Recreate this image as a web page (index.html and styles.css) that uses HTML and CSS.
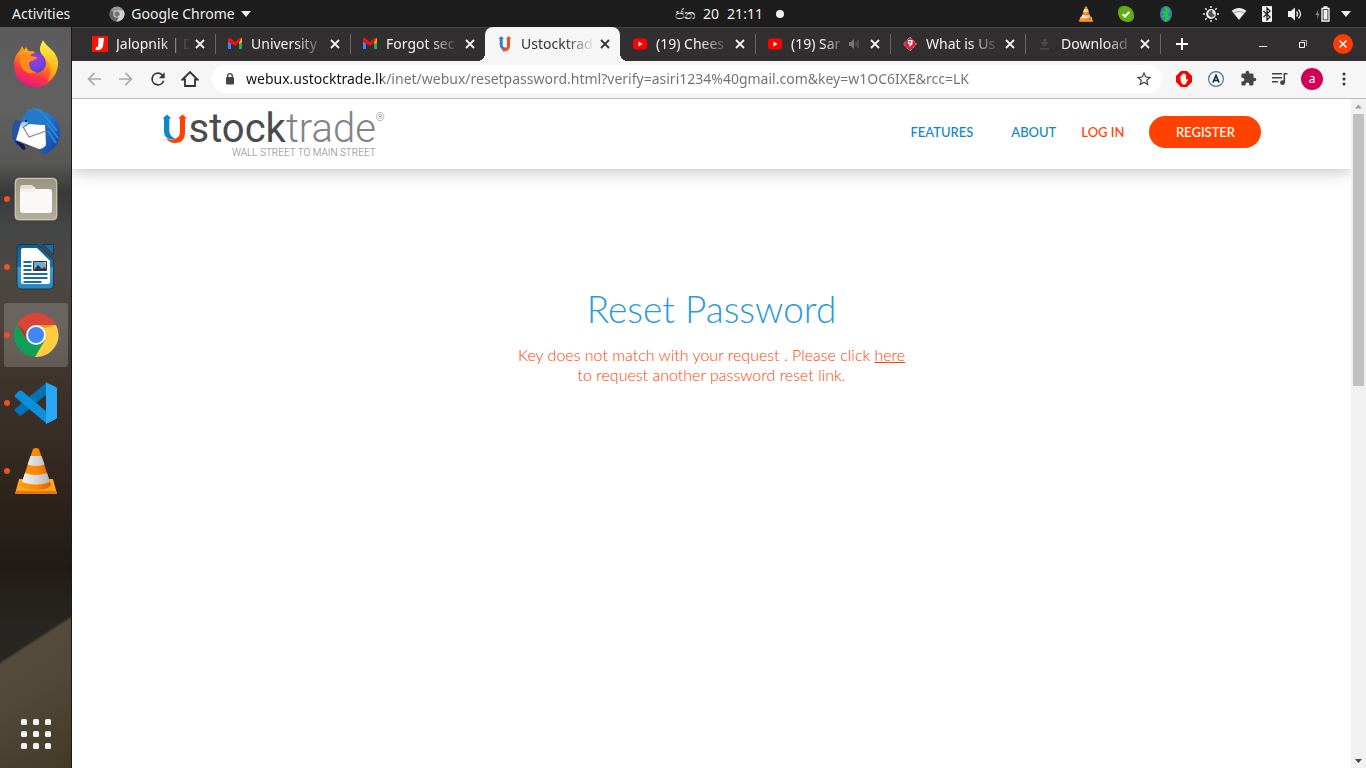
FILE: index.html
```html
<!DOCTYPE html>
<html lang="en">
<head>
<meta charset="utf-8">
<title>Ustocktrade</title>
<link rel="stylesheet" href="styles.css">
</head>
<body>
<svg class="defs" aria-hidden="true">
  <defs>
    <linearGradient id="cone" x1="0" x2="1" y1="0" y2="0"><stop offset="0" stop-color="#f90"/><stop offset=".5" stop-color="#ff8a00"/><stop offset="1" stop-color="#d95f00"/></linearGradient>
    <linearGradient id="coneWhite" x1="0" x2="1" y1="0" y2="0"><stop offset="0" stop-color="#f4f4f4"/><stop offset=".5" stop-color="#d8d8d8"/><stop offset="1" stop-color="#b5b5b5"/></linearGradient>
    <linearGradient id="fox" x1=".8" x2=".3" y1="0" y2="1"><stop offset="0" stop-color="#fff44f"/><stop offset=".35" stop-color="#ff980e"/><stop offset=".7" stop-color="#ff3647"/><stop offset="1" stop-color="#e31587"/></linearGradient>
    <linearGradient id="foxTail" x1=".5" x2=".5" y1="0" y2="1"><stop offset="0" stop-color="#fff44f"/><stop offset=".6" stop-color="#ffbd20"/><stop offset="1" stop-color="#ff8a16"/></linearGradient>
    <radialGradient id="globe" cx=".5" cy=".3" r=".7"><stop offset="0" stop-color="#a43be0"/><stop offset=".6" stop-color="#7542e5"/><stop offset="1" stop-color="#4c46b8"/></radialGradient>
    <linearGradient id="bird" x1="0" x2="1" y1="0" y2="1"><stop offset="0" stop-color="#2aa0e6"/><stop offset=".5" stop-color="#1b6fd0"/><stop offset="1" stop-color="#173c93"/></linearGradient>
    <linearGradient id="writer" x1="0" x2="0" y1="0" y2="1"><stop offset="0" stop-color="#0d5c8f"/><stop offset=".5" stop-color="#1a75ab"/><stop offset=".52" stop-color="#3e9fd2"/><stop offset="1" stop-color="#2b86ba"/></linearGradient>
    <linearGradient id="files" x1="0" x2="0" y1="0" y2="1"><stop offset="0" stop-color="#9b9482"/><stop offset="1" stop-color="#b4ad9b"/></linearGradient>
    <symbol id="vlc" viewBox="0 0 44 48">
      <path d="M5 32h34l4 15H1z" fill="#ffa51e"/><path d="M2 44h40l1 3H1z" fill="#e87700"/>
      <path d="M19 2q3-2 6 0l12 36q-3 5-15 5T7 38z" fill="url(#cone)"/>
      <path d="M16.500 9h11l3 8.500q-8 3-17 0zM11 26q11 4 22 0l3 9q-14 5-28 0z" fill="url(#coneWhite)"/>
    </symbol>
    <symbol id="gmail" viewBox="0 0 16 13">
      <path d="M1 3v9h3V5z" fill="#4285f4"/><path d="M12 5v7h3V3z" fill="#34a853"/><path d="M12 2.500 15 1v4l-3 2z" fill="#fbbc04"/>
      <path d="M1 4.500V1.500Q2 0 4 1.500L8 5l4-3.500Q13 .5 14 1l-1 3.500L8 9z" fill="#e8130c"/>
    </symbol>
    <symbol id="youtube" viewBox="0 0 16 12"><rect x="1" y=".5" width="14" height="11" rx="3" fill="#f00"/><path d="M6.500 3.500v5l4-2.500z" fill="#fff"/></symbol>
    <symbol id="close" viewBox="0 0 16 16"><path d="m4 4 8 8m0-8-8 8" fill="none" stroke="currentColor" stroke-width="1.800"/></symbol>
    <symbol id="bt" viewBox="0 0 16 16"><path d="m4.500 5 6.500 6-3 3V2l3 3-6.500 6" fill="none" stroke="currentColor" stroke-width="1.300"/></symbol>
  </defs>
</svg>

<header class="topbar">
  <div class="topbar-left">
    <button class="bar-btn">Activities</button>
    <button class="bar-btn app-menu">
      <svg width="16" height="16" viewBox="0 0 16 16"><circle cx="8" cy="8" r="7.500" fill="#999"/><path d="M8 8 1.500 4.200A7.500 7.500 0 0 0 7 15.400l3.500-6z" fill="#666"/><path d="M8 4.500h6.600A7.500 7.500 0 0 1 7.500 15.500L11 9.500z" fill="#d0d0d0"/><circle cx="8" cy="8" r="3.600" fill="#ddd"/><circle cx="8" cy="8" r="2.700" fill="#777"/></svg>
      <span>Google Chrome</span>
      <svg width="10" height="6" viewBox="0 0 10 6"><path d="M0 0h10L5 6z" fill="#eee"/></svg>
    </button>
  </div>
  <div class="topbar-clock"><span>ජන</span><span>20</span><span>21:11</span><i class="dot"></i></div>
  <div class="topbar-right">
    <div class="tray">
      <svg width="16" height="16"><use href="#vlc"/></svg>
      <svg width="16" height="16" viewBox="0 0 16 16"><rect width="12" height="12" rx="5" fill="#5a9e12"/><rect x="4" y="4" width="12" height="12" rx="5" fill="#5a9e12"/><circle cx="8" cy="8" r="7.500" fill="#64ad17"/><path d="m4.700 8.200 2.300 2.300 4.300-4.500" fill="none" stroke="#fff" stroke-width="2"/></svg>
      <svg width="16" height="16" viewBox="0 0 16 16"><ellipse cx="8" cy="8" rx="6" ry="8" fill="#4a77ad"/><path d="m4.500 5 6.500 6-3 3V2l3 3-6.500 6" fill="none" stroke="#0be02a" stroke-width="1.600"/></svg>
    </div>
    <div class="status">
      <svg width="16" height="16" viewBox="0 0 16 16"><circle cx="8" cy="8" r="4.900" fill="#eee"/><path d="M9.500 4.200a3.300 3.300 0 0 0 2.500 4.600 3.500 3.500 0 1 1-2.500-4.600" fill="#1d1d1d" opacity=".75"/><path d="M8 0v2m0 12v2M0 8h2m12 0h2M2.300 2.300l1.400 1.400m8.600 8.600 1.400 1.400m0-11.400-1.400 1.400m-8.600 8.600-1.400 1.400" stroke="#eee" stroke-width="1.400"/></svg>
      <svg width="16" height="16" viewBox="0 0 16 16"><path d="M.5 5Q8-1 15.500 5L8 14z" fill="#aaa"/><path d="M1.200 4.500Q8-.5 14.800 4.500l-1.500 2Q8 3 2.700 6.500z" fill="#eee"/><path d="M3.500 7.500Q8 4.500 12.500 7.500L8 13.500z" fill="#f2f2f2"/></svg>
      <svg class="bt-tile" width="16" height="16" viewBox="0 0 16 16"><rect x="3" width="10" height="16" rx="1" fill="#f2f2f2"/><use href="#bt"/></svg>
      <svg width="16" height="16" viewBox="0 0 16 16"><path d="M1 5h3l4-3.500v13L4 11H1z" fill="#f2f2f2"/><path d="M9.500 5.500q2 2.500 0 5M11.500 3.500q4 4.500 0 9" fill="none" stroke="#ddd" stroke-width="1.400"/></svg>
      <svg width="16" height="16" viewBox="0 0 16 16"><path d="M3.500 3 .5 9h2L2 14l2.500-6.500H2.800z" fill="#888"/><path d="M7 2.500h7v12.500H7zM8.500 1h4" fill="none" stroke="#f2f2f2" stroke-width="1.400"/><path d="M8.500 4h4v9.500h-4z" fill="#eee"/></svg>
      <svg class="caret" width="10" height="6" viewBox="0 0 10 6"><path d="M0 0h10L5 6z" fill="#eee"/></svg>
    </div>
  </div>
</header>

<div class="desktop">
  <nav class="dock" aria-label="Dock">
    <button class="dock-item" aria-label="Firefox"><svg width="48" height="48" viewBox="0 0 48 48">
      <path d="M3 28C1 19 6 14 8 11l2-4 3 5h8l6 5 4 16H15z" fill="#ff9416"/>
      <path d="M2 25c0-4 2-9 4-11l2 3c3-5 5-6 6-9l4 7 10 1 8 4 8-1c5 15-6 29-20 29S2 38 2 25z" fill="url(#fox)"/>
      <path d="M31 1c3 7 13 10 15 21 1 9-4 17-11 21 4-6 5-14 2-19-2-5-9-8-9-13 0-5 2-7 3-10z" fill="url(#foxTail)"/>
      <circle cx="24" cy="24" r="10" fill="url(#globe)"/>
      <path d="M8 17c5-3 9-3 11 0l6 1c-1 4-6 3-8 6 0 5 3 9 8 9-9 4-16-2-17-10z" fill="#ff8b18"/>
    </svg></button>
    <button class="dock-item" aria-label="Thunderbird"><svg width="50" height="50" viewBox="0 0 50 50">
      <path d="M4 14C2 18 1 22 1 27c0 5 2 9 5 13l6-3 3-21z" fill="#2352a8"/>
      <path d="M16 5c6-4 12-3 17 1 9 2 16 10 16 20 0 9-4 16-10 19l-5 3h-4l3-3-6 2 8-8V20z" fill="url(#bird)"/>
      <path d="m10 17 24 2 1 20q-3 4-7 4L5 34z" fill="#fff"/><path d="m11 19 7 12 17-6" fill="none" stroke="#888" stroke-width="1.200"/>
      <path d="M20 3q13 1 15 16l-17-1-6 4-2-4Q11 7 20 3z" fill="#2479c9"/><path d="M10 17q7-4 7 0l-6 5z" fill="#a8d7f1"/><circle cx="15" cy="15" r="1.300" fill="#222"/>
      <path d="m34 10 12 15M36 17l11 15M37 25l8 12" stroke="#3189d4" stroke-width="2"/>
      <path d="m4 35 8 9 3-1-2-4 8 3-16-7z" fill="#1d1452"/>
    </svg></button>
    <button class="dock-item running" aria-label="Files"><svg width="46" height="46" viewBox="0 0 46 46">
      <rect x="1" y="1" width="44" height="44" rx="5" fill="url(#files)" stroke="#3e3b35"/><rect x="2.500" y="2.500" width="41" height="41" rx="4" fill="none" stroke="#c8c2b3"/>
      <path d="M7 12q0-3 3-3h9l4 4h12v8H7z" fill="#e1ddd5"/><rect x="7" y="13" width="32" height="24" rx="3" fill="#faf9f7"/><path d="M7 13h10l5-2v5H7z" fill="#f2f0ec"/>
    </svg></button>
    <button class="dock-item running" aria-label="LibreOffice Writer"><svg width="40" height="48" viewBox="0 0 40 48">
      <path d="M5 1.500h17L37.500 17v25q0 4-4 4H5q-4 0-4-4V6q0-4.500 4-4.500z" fill="url(#writer)" stroke="#153b52"/><path d="M27 1.500h10.500V12z" fill="#1b6c9e" stroke="#153b52"/>
      <path d="M7 5h14l13 13v21q0 2-2 2H7q-2 0-2-2V7q0-2 2-2z" fill="#fff"/>
      <path d="M7.500 19h8M7.500 23h8M7.500 27h8M7.500 31h24M7.500 35h24M7.500 39h18" stroke="#1b6c9e" stroke-width="2"/><path d="M17.500 18.500h13v9h-13z" fill="#68add5" stroke="#333"/><path d="m18 27 4-5 4 4 2-2 3 3z" fill="#333"/><path d="M28 19h2v3z" fill="#ffd33c"/>
    </svg></button>
    <button class="dock-item running active" aria-label="Google Chrome"><svg width="46" height="46" viewBox="0 0 46 46">
      <circle cx="23" cy="23" r="22" fill="#119e57"/>
      <path d="M4 12A22 22 0 0 1 43 13H23a10 10 0 0 0-9 15z" fill="#db4437"/><path d="M23 13h20A22 22 0 0 1 22 45l10-17z" fill="#ffcd40"/>
      <path d="m4 12 10 16v-7z" fill="#b9362b"/><path d="M23 13h20l-11 3z" fill="#d89b30"/>
      <circle cx="23" cy="23" r="10" fill="#f2f2f2"/><circle cx="23" cy="23" r="8" fill="#4285f4"/>
    </svg></button>
    <button class="dock-item running" aria-label="Visual Studio Code"><svg width="44" height="44" viewBox="0 0 44 44">
      <path d="m1 30 4 4q1 1 3 0l25-21V1L1 28q-1 1 0 2z" fill="#0072b8"/><path d="m1 14 4-4q1-1 3 0l25 21v12L1 16q-1-1 0-2z" fill="#0a8fdc"/>
      <path d="M32 1.500 41 5.500q2 1 2 2v29q0 1-2 2l-9 4.500z" fill="#29a7f5"/>
    </svg></button>
    <button class="dock-item running" aria-label="VLC"><svg width="44" height="48"><use href="#vlc"/></svg></button>
    <button class="dock-item apps" aria-label="Show applications"><svg width="32" height="32" viewBox="0 0 32 32" fill="#f2f2f2"><rect x="1" y="1" width="6" height="6" rx="1.500"/><rect x="13" y="1" width="6" height="6" rx="1.500"/><rect x="25" y="1" width="6" height="6" rx="1.500"/><rect x="1" y="13" width="6" height="6" rx="1.500"/><rect x="13" y="13" width="6" height="6" rx="1.500"/><rect x="25" y="13" width="6" height="6" rx="1.500"/><rect x="1" y="25" width="6" height="6" rx="1.500"/><rect x="13" y="25" width="6" height="6" rx="1.500"/><rect x="25" y="25" width="6" height="6" rx="1.500"/></svg></button>
  </nav>

  <div class="window">
    <div class="tabstrip">
      <div class="tab"><svg width="16" height="16" viewBox="0 0 16 16"><path d="M0 0h16v16H0z" fill="#f91300"/><path d="M6.500 2H12l-1 8q-1 4-5 4H3.500L4 11h1q1 0 1.200-2z" fill="#fff"/></svg><span class="tab-title">Jalopnik | D</span><button class="tab-close" aria-label="Close tab"><svg width="16" height="16"><use href="#close"/></svg></button></div>
      <div class="tab"><svg width="16" height="13"><use href="#gmail"/></svg><span class="tab-title">University</span><button class="tab-close" aria-label="Close tab"><svg width="16" height="16"><use href="#close"/></svg></button></div>
      <div class="tab before-active"><svg width="16" height="13"><use href="#gmail"/></svg><span class="tab-title">Forgot sec</span><button class="tab-close" aria-label="Close tab"><svg width="16" height="16"><use href="#close"/></svg></button></div>
      <div class="tab current"><svg width="16" height="16" viewBox="0 0 16 16"><path d="M4.200 2v7Q4.500 13 9 13" fill="none" stroke="#3f78c5" stroke-width="3"/><path d="M11.500 2v8q-.5 4.500-6 3.700" fill="none" stroke="#f04e23" stroke-width="3"/><path d="M1.500 3 4.200 0 7 3z" fill="#3f78c5"/><path d="M9 3l2.500-3 3 3z" fill="#f04e23"/></svg><span class="tab-title">Ustocktrad</span><button class="tab-close" aria-label="Close tab"><svg width="16" height="16"><use href="#close"/></svg></button></div>
      <div class="tab"><svg width="16" height="12"><use href="#youtube"/></svg><span class="tab-title">(19) Chees</span><button class="tab-close" aria-label="Close tab"><svg width="16" height="16"><use href="#close"/></svg></button></div>
      <div class="tab"><svg width="16" height="12"><use href="#youtube"/></svg><span class="tab-title">(19) Sar</span><svg class="audio" width="12" height="12" viewBox="0 0 12 12"><path d="M1 4h2l3-3v10L3 8H1z" fill="#777"/><path d="M8 4v4M10 2v8" stroke="#666"/></svg><button class="tab-close" aria-label="Close tab"><svg width="16" height="16"><use href="#close"/></svg></button></div>
      <div class="tab"><svg width="16" height="16" viewBox="0 0 16 16"><path d="m8 1 6.500 7L8 15 1.500 8z" fill="#e01e37" stroke="#f5b5bd" stroke-dasharray="1 1"/><path d="M6 4h4.500v4L7.500 11V8H6z" fill="#fff"/><circle cx="8" cy="6" r="1" fill="#e01e37"/></svg><span class="tab-title">What is Us</span><button class="tab-close" aria-label="Close tab"><svg width="16" height="16"><use href="#close"/></svg></button></div>
      <div class="tab"><svg width="16" height="16" viewBox="0 0 16 16"><path d="M6 3h3v3h3L7.500 10.500 3 6h3zM3 12h9v1.500H3z" fill="#4b4849"/></svg><span class="tab-title">Download</span><button class="tab-close" aria-label="Close tab"><svg width="16" height="16"><use href="#close"/></svg></button></div>
      <button class="new-tab" aria-label="New tab"><svg width="12" height="12" viewBox="0 0 12 12"><path d="M6 0v12M0 6h12" stroke="#fff" stroke-width="2"/></svg></button>
      <div class="controls">
        <button aria-label="Minimize"><svg width="8" height="8" viewBox="0 0 8 8"><path d="M0 6.500h8" stroke="#fff"/></svg></button>
        <button aria-label="Restore"><svg width="8" height="8" viewBox="0 0 8 8" fill="none"><path d="M2 .5h5.500V6" stroke="#aaa"/><path d="M.5 2.500h5v5h-5z" stroke="#fff"/></svg></button>
        <button class="quit" aria-label="Close window"><svg width="8" height="8" viewBox="0 0 8 8"><path d="m.5.5 7 7m0-7-7 7" stroke="#fff" stroke-width="1.500"/></svg></button>
      </div>
    </div>

    <div class="toolbar">
      <button class="tool" aria-label="Back"><svg width="20" height="20" viewBox="0 0 24 24" fill="#a9a9a9"><path d="M20.500 11H7.800l5.600-5.600L12 4l-8 8 8 8 1.400-1.400L7.800 13h12.700z"/></svg></button>
      <button class="tool" aria-label="Forward"><svg width="20" height="20" viewBox="0 0 24 24" fill="#a9a9a9"><path d="M3.500 11h12.700l-5.600-5.600L12 4l8 8-8 8-1.400-1.400 5.600-5.600H3.500z"/></svg></button>
      <button class="tool" aria-label="Reload"><svg width="20" height="20" viewBox="0 0 24 24" fill="#333"><path d="M17.650 6.350A8 8 0 0 0 12 4a8 8 0 1 0 7.730 10h-2.080A6 6 0 1 1 12 6c1.660 0 3.140.690 4.220 1.780L13 11h7V4z"/></svg></button>
      <button class="tool" aria-label="Home"><svg width="18" height="18" viewBox="0 0 18 18"><path d="M1.500 9.500 9 2l7.500 7.500H14V16H4V9.500z" fill="none" stroke="#333" stroke-width="1.800"/></svg></button>
      <div class="omnibox">
        <svg width="10" height="12" viewBox="0 0 10 12"><rect x="1" y="4" width="8" height="7.500" rx="1" fill="#444"/><path d="M2.700 4.500V3a2.300 2.300 0 0 1 4.600 0v1.500" fill="none" stroke="#444" stroke-width="1.300"/></svg>
        <input class="url" type="text" aria-label="Address" value="webux.ustocktrade.lk/inet/webux/resetpassword.html?verify=asiri1234%40gmail.com&amp;key=w1OC6IXE&amp;rcc=LK">
        <button class="star" aria-label="Bookmark"><svg width="18" height="18" viewBox="0 0 24 24" fill="#444"><path d="m22 9.240-7.190-.620L12 2 9.190 8.630 2 9.240l5.460 4.730L5.820 21 12 17.270 18.180 21l-1.630-7.030zM12 15.400l-3.760 2.270 1-4.280-3.320-2.880 4.380-.380L12 6.100l1.710 4.040 4.380.380-3.320 2.880 1 4.280z"/></svg></button>
      </div>
      <button class="tool" aria-label="Ad blocker"><svg width="16" height="16" viewBox="0 0 16 16"><path d="M5 0h6l5 5v6l-5 5H5l-5-5V5z" fill="#f60000"/><path d="M4.500 8V5q.8-1 1.300 0V3.500q.8-1 1.400 0V2.800q.8-1 1.500 0v1q.8-1 1.400 0V9l1.200-1q1 0 .5 1.200L9.500 13.500h-3Q4.500 12 4.500 8z" fill="#fff"/></svg></button>
      <button class="tool" aria-label="Extension A"><svg width="16" height="16" viewBox="0 0 16 16" fill="none"><circle cx="8" cy="8" r="7.400" stroke="#5c7386" stroke-width="1.200"/><path d="M5 11.500 8 4.500l3 7M6.200 9.500h3.600" stroke="#152c5a" stroke-width="1.700"/></svg></button>
      <button class="tool" aria-label="Extensions"><svg width="17" height="17" viewBox="0 0 24 24" fill="#444"><path d="M20.500 11H19V7a2 2 0 0 0-2-2h-4V3.500a2.500 2.500 0 0 0-5 0V5H4a2 2 0 0 0-2 2v3.800h1.500a2.700 2.700 0 0 1 0 5.400H2V20c0 1.100.9 2 2 2h3.800v-1.500a2.700 2.700 0 0 1 5.400 0V22H17a2 2 0 0 0 2-2v-4h1.500a2.500 2.500 0 0 0 0-5z"/></svg></button>
      <button class="tool" aria-label="Media"><svg width="18" height="16" viewBox="0 0 18 16"><path d="M1 2.700h10M1 6.700h10M1 10.700h6" stroke="#444" stroke-width="1.500"/><path d="M16.500 2.700h-3.200v9" fill="none" stroke="#444" stroke-width="1.600"/><circle cx="11.500" cy="11.700" r="2.400" fill="#444"/></svg></button>
      <button class="tool" aria-label="Profile"><span class="avatar">a</span></button>
      <button class="tool" aria-label="Menu"><svg width="4" height="14" viewBox="0 0 4 14" fill="#333"><circle cx="2" cy="2" r="1.500"/><circle cx="2" cy="7" r="1.500"/><circle cx="2" cy="12" r="1.500"/></svg></button>
    </div>

    <div class="viewport">
      <div class="page">
        <header class="site-header">
          <a class="logo" href="#" aria-label="Ustocktrade home">
            <svg class="logo-mark" width="26" height="30" viewBox="0 0 26 30"><path d="M.5 4.500 5 .5l4.500 4H7.300V17q0 5 6.700 8-7 1.500-10-2-2-2-2-6V4.500z" fill="#0b86cf"/><path d="M16 4.500 20.500.5l4.500 4h-2V18q0 11-10 11-6 0-9-5 5 3 9 1 5-2 5-7V4.500z" fill="#ff4200"/></svg>
            <span class="logo-words">
              <span class="logo-name"><b>stock</b><span>trade</span><sup>®</sup></span>
              <span class="logo-tag">WALL STREET TO MAIN STREET</span>
            </span>
          </a>
          <nav class="site-nav">
            <a class="wide" href="#">FEATURES</a>
            <a href="#">ABOUT</a>
            <a class="login" href="#">LOG IN</a>
            <a class="register" href="#">REGISTER</a>
          </nav>
        </header>
        <main class="content">
          <h1>Reset Password</h1>
          <p>Key does not match with your request . Please click <a href="#">here</a> to request another password reset link.</p>
        </main>
      </div>
      <div class="scrollbar" aria-hidden="true">
        <svg width="15" height="15" viewBox="0 0 15 15"><path d="m4 9.500 3.500-4 3.500 4z" fill="#a0a0a0"/></svg>
        <div class="track"><div class="thumb"></div></div>
        <svg width="15" height="15" viewBox="0 0 15 15"><path d="m4 6 3.500 4L11 6z" fill="#444"/></svg>
      </div>
    </div>
  </div>
</div>
</body>
</html>
```
FILE: styles.css
```css
* { box-sizing: border-box; }

body {
  margin: 0;
  height: 100vh;
  display: flex;
  flex-direction: column;
  overflow: hidden;
  font-family: "Noto Sans", "Open Sans", sans-serif;
  font-size: 14px;
  background: #1d1d1d;
}

button {
  display: flex;
  align-items: center;
  justify-content: center;
  padding: 0;
  border: 0;
  background: none;
  color: inherit;
  font: inherit;
}

svg { display: block; flex: none; }
.defs { position: absolute; width: 0; height: 0; }

/* Desktop top bar */
.topbar {
  display: grid;
  grid-template-columns: 1fr auto 1fr;
  align-items: center;
  height: 27px;
  flex: none;
  padding: 0 15px 0 12px;
  background: #1d1d1d;
  color: #eee;
}
.topbar-left, .topbar-clock, .topbar-right, .tray, .status { display: flex; align-items: center; }
.topbar-left { gap: 39px; }
.app-menu { gap: 6px; }
.topbar-clock { gap: 8px; padding-left: 96px; }
.dot { width: 8px; height: 8px; margin-left: 5px; border-radius: 50%; background: #f2f2f2; }
.topbar-right { justify-content: flex-end; gap: 29px; }
.tray { gap: 24px; }
.status { gap: 12px; }
.bt-tile { color: #222; }
.caret { margin-left: -2px; }

.desktop { flex: 1; display: flex; min-height: 0; }

/* Dock */
.dock {
  flex: none;
  width: 72px;
  display: flex;
  flex-direction: column;
  align-items: center;
  gap: 4px;
  padding: 4px 0 2px;
  border-right: 1px solid #1c1a19;
  background:
    linear-gradient(147deg, transparent 532px, #544b3d 535px, #514736 580px, #433927 100%),
    linear-gradient(#5a5b5a 0, #606160 80px, #585857 135px, #373a39 165px, #444645 200px, #4b4846 240px, #4a423b 300px, #3f342b 350px, #362b22 420px, #2c221a 480px, #211b16 540px, #282622 600px, #282622 100%);
}
.dock-item { position: relative; width: 64px; height: 64px; border-radius: 3px; }
.dock-item.active { background: rgba(255, 255, 255, 0.18); }
.dock-item.running::before {
  content: "";
  position: absolute;
  left: 0;
  top: 29px;
  width: 6px;
  height: 6px;
  border-radius: 50%;
  background: #e95420;
}
.dock-item.apps { margin-top: auto; }

/* Browser frame */
.window { flex: 1; min-width: 0; display: flex; flex-direction: column; background: #fff; }
.tabstrip {
  display: flex;
  flex: none;
  height: 34px;
  padding-left: 8px;
  border-top: 1px solid #454344;
  background: #322f30;
  color: #f2f2f2;
}
.tab {
  position: relative;
  flex: 0 1 135px;
  min-width: 0;
  display: flex;
  align-items: center;
  padding: 0 7px 2px 12px;
}
.tab:not(.current):not(.before-active)::after {
  content: "";
  position: absolute;
  right: -1px;
  top: 6px;
  width: 1px;
  height: 20px;
  background: #686566;
}
.tab-title {
  flex: 1;
  min-width: 0;
  margin: 0 2px 0 8px;
  overflow: hidden;
  white-space: nowrap;
  -webkit-mask-image: linear-gradient(to right, #000 60%, transparent 100%);
  mask-image: linear-gradient(to right, #000 60%, transparent 100%);
}
.audio { margin-right: 7px; }
.tab-close { width: 16px; height: 16px; }
.tab.current { border-radius: 8px 8px 0 0; margin-top: -1px; padding-bottom: 1px; background: #f6f6f6; color: #333; }
.tab.current::before, .tab.current::after {
  content: "";
  position: absolute;
  bottom: 0;
  width: 8px;
  height: 8px;
}
.tab.current::before { left: -8px; background: radial-gradient(circle at 0 0, transparent 8px, #f6f6f6 8px); }
.tab.current::after { right: -8px; background: radial-gradient(circle at 100% 0, transparent 8px, #f6f6f6 8px); }
.new-tab { width: 28px; margin-left: 8px; padding-bottom: 1px; }
.controls { display: flex; align-items: center; gap: 20px; margin-left: auto; padding: 0 13px 1px 0; }
.controls button { width: 20px; height: 20px; border-radius: 50%; }
.controls .quit { background: #fb3c06; }

.toolbar {
  display: flex;
  align-items: center;
  flex: none;
  height: 38px;
  padding: 0 6px 2px;
  border-bottom: 1px solid #bdbdbd;
  background: #f6f6f6;
}
.tool { width: 32px; height: 28px; }
.omnibox {
  flex: 1;
  min-width: 0;
  display: flex;
  align-items: center;
  height: 28px;
  margin: 0 6px;
  padding: 0 9px 0 13px;
  border-radius: 14px;
  background: #fff;
}
.url {
  flex: 1;
  min-width: 0;
  margin: 0 10px 0 11px;
  padding: 0;
  border: 0;
  outline: 0;
  font: inherit;
  color: transparent;
  background: linear-gradient(to right, #111 136px, #707070 136px);
  -webkit-background-clip: text;
  background-clip: text;
}
.avatar {
  width: 22px;
  height: 22px;
  border-radius: 50%;
  background: #d10056;
  color: #fff;
  font-size: 12px;
  line-height: 21px;
}

/* Web page */
.viewport { flex: 1; min-height: 0; display: flex; }
.page { flex: 1; min-width: 0; overflow: hidden; font-family: Lato, sans-serif; }
.site-header {
  display: flex;
  align-items: flex-start;
  justify-content: space-between;
  height: 70px;
  padding: 0 7%;
  background: #fff;
  box-shadow: 0 2px 16px rgba(0, 0, 0, 0.25);
}
.logo { display: flex; padding-top: 15px; text-decoration: none; color: #828387; font-family: Roboto, sans-serif; }
.logo-mark { margin-right: 1px; }
.logo-words { display: flex; flex-direction: column; }
.logo-name { display: flex; font-size: 40px; line-height: 36px; margin-top: -3px; font-weight: 300; }
.logo-name b { color: #4b4b4d; font-weight: 400; }
.logo-name sup { font-size: 11px; line-height: 14px; }
.logo-tag { align-self: flex-end; margin: 1px 9px 0 0; font-size: 10px; line-height: 10px; font-weight: 300; }
.site-nav { display: flex; align-items: center; padding-top: 17px; font-size: 13px; line-height: 32px; font-weight: 500; }
.site-nav a { color: #0b86cf; text-decoration: none; margin-right: 25px; }
.site-nav .wide { margin-right: 38px; }
.site-nav .login { color: #ff4200; }
.site-nav .register { width: 112px; margin-right: 0; border-radius: 16px; background: #ff4200; color: #fff; text-align: center; }
.content { padding: 115px 20px 0; text-align: center; }
.content h1 { margin: 0; font-size: 37px; line-height: 50px; font-weight: 300; color: #2a9bd8; }
.content p { max-width: 400px; margin: 11px auto 0; font-size: 16px; line-height: 20px; font-weight: 300; color: #ff4200; }
.content p a { color: inherit; }

.scrollbar { flex: none; width: 15px; display: flex; flex-direction: column; background: #f1f1f1; }
.track { flex: 1; padding: 0 2px; }
.thumb { height: 42.5%; background: #c1c1c1; }
```
